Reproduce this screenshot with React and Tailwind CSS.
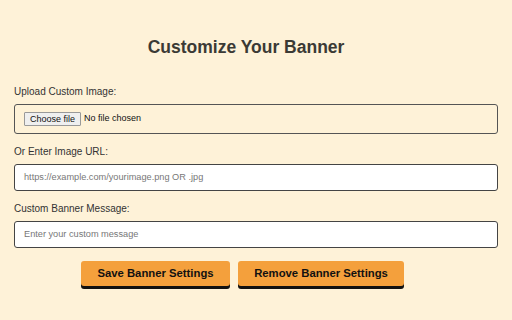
export default function App() {
  return (
    <div className="w-[512px] h-[320px] bg-[#fef2d8] overflow-hidden" style={{ fontFamily: '"Liberation Sans", Arial, sans-serif' }}>
      <div className="px-[14px] pt-[37px] flex flex-col">
        <h1 className="text-[17.5px] leading-[21px] font-bold text-[#3b3a35] text-center pr-[20px]">Customize Your Banner</h1>
        <label className="mt-[28px] text-[10px] leading-[12px] text-[#333]">Upload Custom Image:</label>
        <div className="mt-[6px] h-[30px] border border-[#555] rounded-[3px] flex items-center pl-[9px]">
          <span className="text-[9px] leading-[12px] text-[#111] border border-[#999] bg-[#efefef] px-[5px] h-[14px] flex items-center rounded-[1px]">Choose file</span>
          <span className="ml-[3px] text-[9px] text-[#111]">No file chosen</span>
        </div>
        <label className="mt-[12px] text-[10px] leading-[12px] text-[#333]">Or Enter Image URL:</label>
        <div className="mt-[6px] h-[27px] border border-[#444] rounded-[3px] bg-white flex items-center pl-[9px]">
          <span className="text-[9.2px] text-[#777]">https://example.com/yourimage.png OR .jpg</span>
        </div>
        <label className="mt-[12px] text-[10px] leading-[12px] text-[#333]">Custom Banner Message:</label>
        <div className="mt-[6px] h-[27px] border border-[#444] rounded-[3px] bg-white flex items-center pl-[9px]">
          <span className="text-[9.2px] text-[#777]">Enter your custom message</span>
        </div>
        <div className="mt-[13px] flex justify-center gap-[8px] pr-[27px]">
          <div className="w-[149px] h-[25px] bg-[#f4a03c] rounded-[3px] shadow-[0_3px_0_#111] flex items-center justify-center text-[11.3px] font-bold text-[#111]">Save Banner Settings</div>
          <div className="w-[166px] h-[25px] bg-[#f4a03c] rounded-[3px] shadow-[0_3px_0_#111] flex items-center justify-center text-[11.3px] font-bold text-[#111]">Remove Banner Settings</div>
        </div>
      </div>
    </div>
  );
}
